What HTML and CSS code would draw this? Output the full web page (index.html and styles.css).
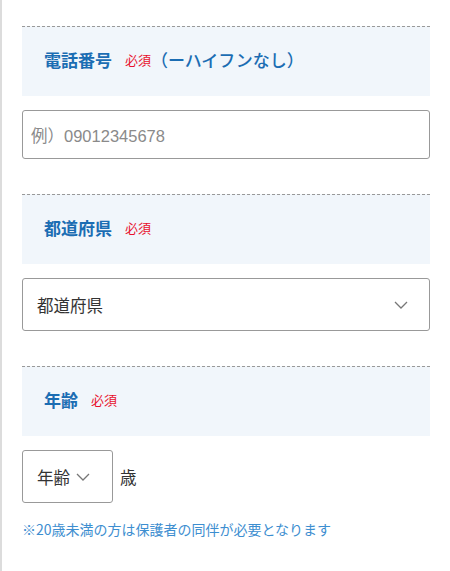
FILE: index.html
```html
<!DOCTYPE html>
<html lang="ja">
<head>
<meta charset="utf-8">
<link rel="stylesheet" href="styles.css">
</head>
<body>
<div class="page">
  <section class="field">
    <div class="field-head">
      <span class="field-label">電話番号</span>
      <span class="req">必須</span>
      <span class="field-sub">（ーハイフンなし）</span>
    </div>
    <div class="text-input"><span class="placeholder">例）09012345678</span></div>
  </section>

  <section class="field">
    <div class="field-head">
      <span class="field-label">都道府県</span>
      <span class="req">必須</span>
    </div>
    <div class="select select-wide">
      <span class="select-text">都道府県</span>
      <svg class="chev" width="14" height="8" viewBox="0 0 14 8"><path d="M1 1 L7 7 L13 1" fill="none" stroke="#777" stroke-width="1.3"/></svg>
    </div>
  </section>

  <section class="field">
    <div class="field-head">
      <span class="field-label">年齢</span>
      <span class="req">必須</span>
    </div>
    <div class="age-row">
      <div class="select select-age">
        <span class="select-text">年齢</span>
        <svg class="chev" width="14" height="8" viewBox="0 0 14 8"><path d="M1 1 L7 7 L13 1" fill="none" stroke="#777" stroke-width="1.3"/></svg>
      </div>
      <span class="unit">歳</span>
    </div>
    <p class="note">※20歳未満の方は保護者の同伴が必要となります</p>
  </section>
</div>
</body>
</html>
```
FILE: styles.css
```css
html, body {
  margin: 0;
  padding: 0;
  background: #fff;
  height: 100%;
}
body {
  font-family: "Liberation Sans", "Noto Sans CJK JP", sans-serif;
  color: #333;
}
.page {
  border-left: 2px solid #dcdcdc;
  min-height: 100%;
  box-sizing: border-box;
  padding: 26px 20px 0 20px;
}
.field {
  margin-bottom: 35px;
}
.field-head {
  border-top: 1px dashed #999;
  background: #f1f6fb;
  height: 65px;
  box-sizing: content-box;
  display: flex;
  align-items: center;
  padding-left: 22px;
  padding-bottom: 4px;
  margin-bottom: 14px;
}
.field-label {
  font-size: 17px;
  font-weight: bold;
  color: #1b6db3;
  font-family: "Noto Sans CJK JP", sans-serif;
}
.req {
  font-size: 13px;
  color: #e8102d;
  margin-left: 13px;
  font-family: "Noto Sans CJK JP", sans-serif;
}
.field-sub {
  font-size: 17px;
  color: #1b6db3;
  font-weight: 500;
  font-family: "Noto Sans CJK JP", sans-serif;
}
.text-input {
  height: 49px;
  box-sizing: border-box;
  border: 1px solid #999;
  border-radius: 3px;
  display: flex;
  align-items: center;
  padding-left: 8px;
}
.placeholder {
  font-size: 16.5px;
  color: #8a8a8a;
}
.select {
  box-sizing: border-box;
  border: 1px solid #999;
  border-radius: 3px;
  display: flex;
  align-items: center;
}
.select-wide {
  height: 53px;
  padding: 0 21px 0 14px;
  justify-content: space-between;
}
.select-text {
  font-size: 16.5px;
  color: #333;
  font-family: "Noto Sans CJK JP", sans-serif;
}
.age-row {
  display: flex;
  align-items: center;
}
.select-age {
  width: 91px;
  height: 53px;
  padding-left: 14px;
}
.select-age .chev {
  margin-left: 6px;
}
.unit {
  margin-left: 7px;
  font-size: 16.5px;
  color: #333;
  font-family: "Noto Sans CJK JP", sans-serif;
}
.note {
  margin: 16px 0 0 0;
  font-size: 14px;
  color: #3d8ed0;
  font-family: "Noto Sans CJK JP", sans-serif;
}
```
